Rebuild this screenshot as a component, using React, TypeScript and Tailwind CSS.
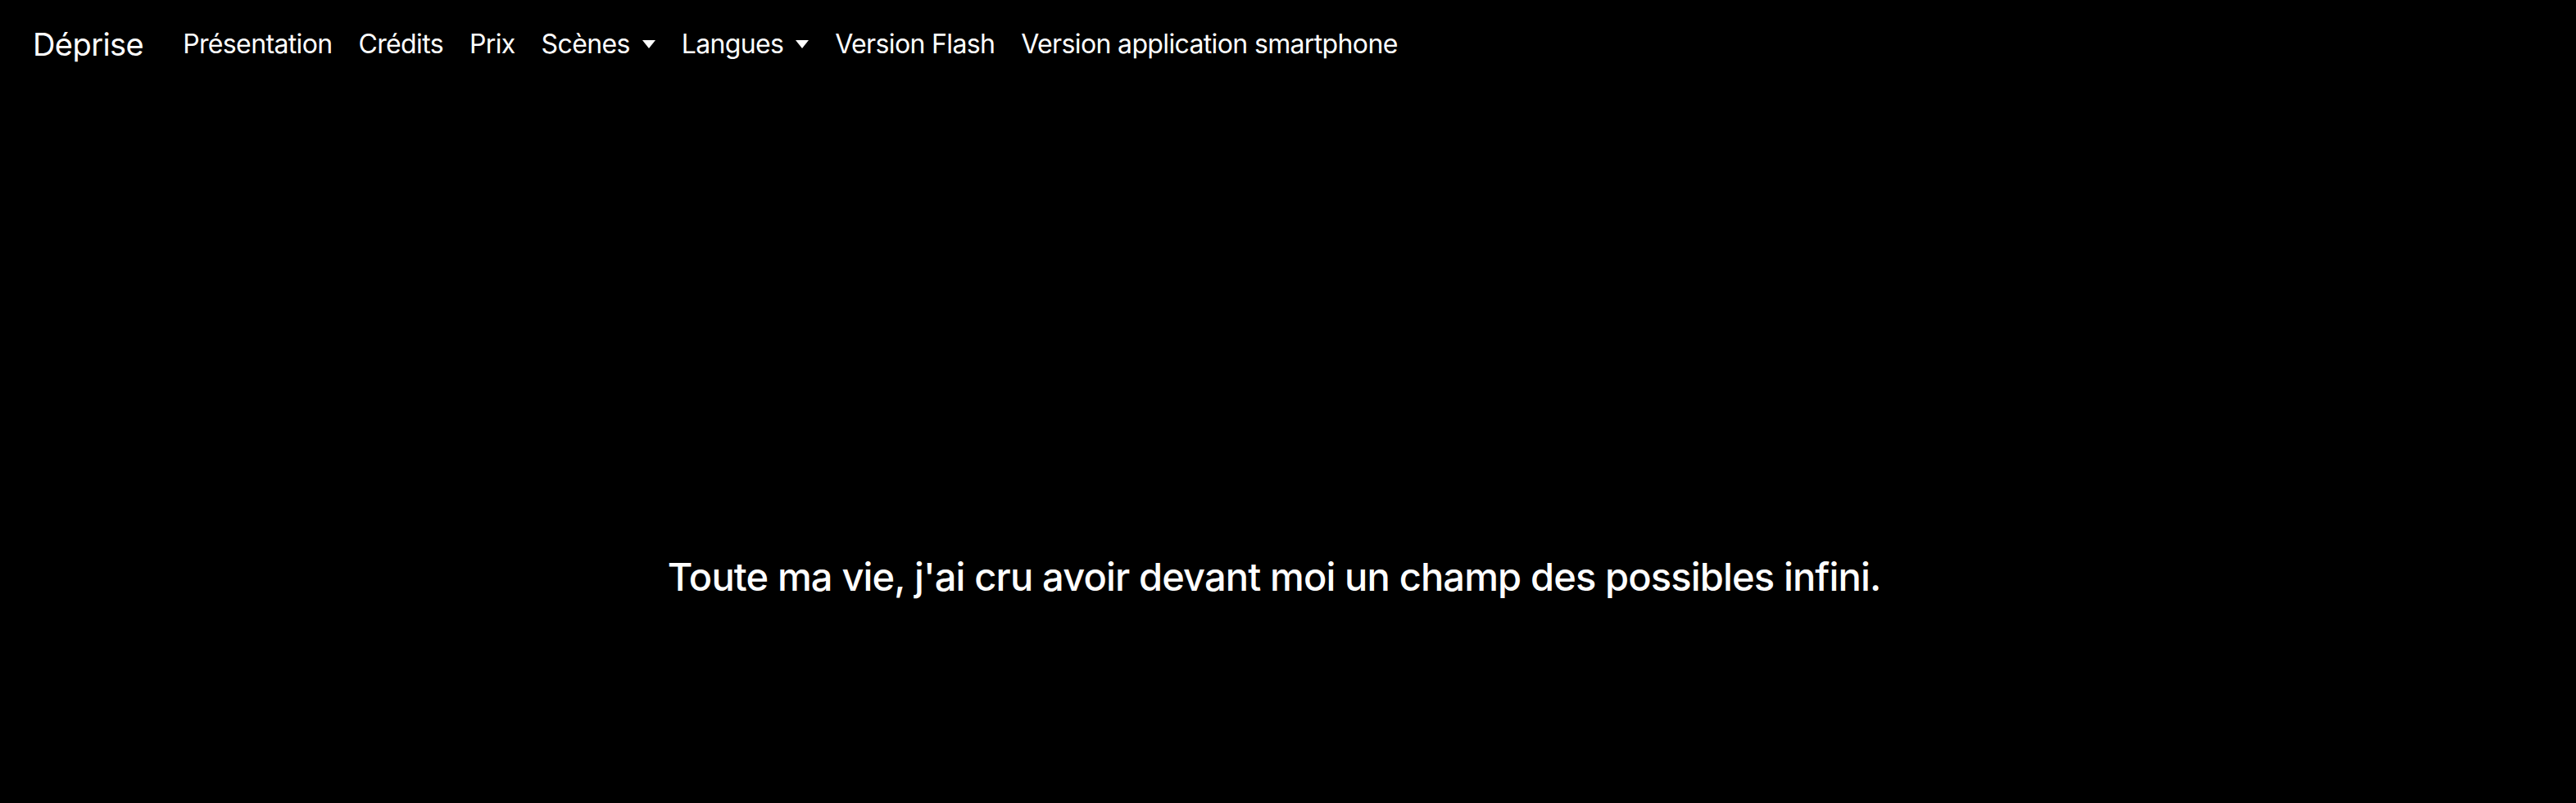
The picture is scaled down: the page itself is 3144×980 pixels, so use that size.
import React from 'react';

const navLinks = [
  { label: 'Présentation' },
  { label: 'Crédits' },
  { label: 'Prix' },
  { label: 'Scènes', dropdown: true },
  { label: 'Langues', dropdown: true },
  { label: 'Version Flash' },
  { label: 'Version application smartphone' },
];

const App: React.FC = () => {
  return (
    <div
      className="flex h-[980px] w-full flex-col bg-black text-white"
      style={{ fontFamily: 'Inter, "Noto Sans", sans-serif' }}
    >
      {/* Navbar */}
      <nav className="flex h-[108px] items-center px-[40px]">
        <a href="#" className="mr-[32px] text-[38px] leading-none font-normal tracking-[-0.015em]">
          Déprise
        </a>
        <ul className="flex items-center">
          {navLinks.map((link) => (
            <li key={link.label}>
              <a href="#" className="flex items-center px-[16px] text-[32px] leading-none tracking-[-0.02em]">
                {link.label}
                {link.dropdown && (
                  <span className="ml-[15px] inline-block h-0 w-0 border-x-[8px] border-t-[10px] border-x-transparent border-t-white" />
                )}
              </a>
            </li>
          ))}
        </ul>
      </nav>

      {/* Scene subtitle */}
      <main className="flex flex-1 justify-center pt-[572px] pr-[34px]">
        <p className="text-[47px] leading-none font-medium tracking-[-0.018em]">
          Toute ma vie, j'ai cru avoir devant moi un champ des possibles infini.
        </p>
      </main>
    </div>
  );
};

export default App;
